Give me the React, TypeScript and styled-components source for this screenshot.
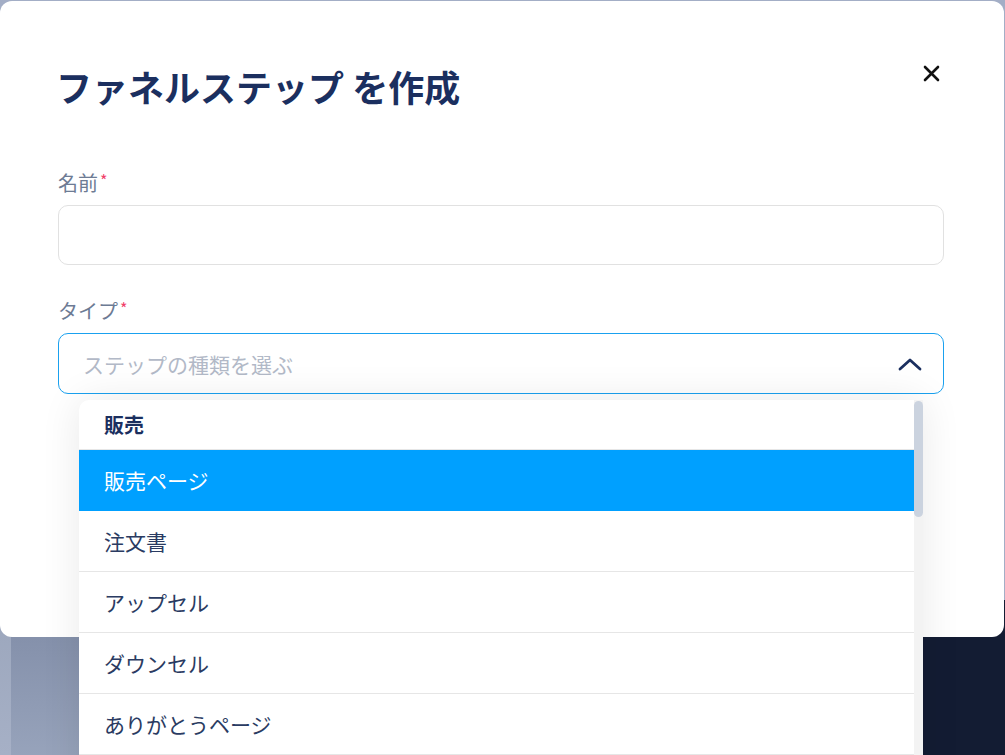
import * as React from 'react'
import styled, { createGlobalStyle } from 'styled-components'

const GlobalStyle = createGlobalStyle`
    html, body {
        margin: 0;
        padding: 0;
    }
    body {
        font-family: "Noto Sans CJK JP", "Noto Sans", sans-serif;
        overflow: hidden;
    }
`

const Page = styled.div`
    position: relative;
    width: 1005px;
    height: 755px;
    overflow: hidden;
    background: #a3aec6;
`

const Backdrop = styled.div`
    display: grid;
    grid-template-rows: 600px 1fr;
    height: 100%;
`

const BackdropBottom = styled.div`
    display: grid;
    grid-template-columns: 11px 1fr 82px;
`

const Shade = styled.div<{ $tone: string }>`
    background: ${p => p.$tone};
`

const Modal = styled.div`
    position: absolute;
    top: 1px;
    left: 0;
    width: 1004px;
    height: 636px;
    background: #fff;
    border-radius: 12px;
    box-sizing: border-box;
    padding: 60px 60px 0 58px;
`

const Header = styled.div`
    display: flex;
    justify-content: space-between;
    align-items: flex-start;
`

const Title = styled.h1`
    margin: 0 0 0 -2px;
    font-size: 36px;
    line-height: 50px;
    font-weight: 700;
    color: #1b2f5f;
`

const CloseButton = styled.button`
    border: 0;
    background: none;
    padding: 0;
    margin: 2px 3px 0 0;
    width: 20px;
    height: 20px;
    display: flex;
    align-items: center;
    justify-content: center;
    cursor: pointer;
`

const Form = styled.div`
    display: flex;
    flex-direction: column;
    margin-top: 58px;
`

const Field = styled.div`
    display: flex;
    flex-direction: column;
    gap: 8px;
    & + & {
        margin-top: 32px;
    }
`

const Label = styled.label`
    font-size: 20px;
    line-height: 28px;
    color: #6d7b94;
`

const Required = styled.span`
    color: #f0406a;
    font-size: 16px;
    vertical-align: top;
    margin-left: 2px;
    line-height: 22px;
`

const Input = styled.div`
    height: 60px;
    border: 1px solid #e1e1e1;
    border-radius: 10px;
    box-sizing: border-box;
`

const SelectWrap = styled.div`
    position: relative;
`

const SelectBox = styled.div`
    height: 61px;
    border: 1px solid #1aa1ef;
    border-radius: 10px;
    box-sizing: border-box;
    display: flex;
    align-items: center;
    justify-content: space-between;
    padding: 0 21px 0 24px;
`

const Placeholder = styled.span`
    font-size: 21px;
    color: #b2b9c7;
`

const Dropdown = styled.div`
    position: absolute;
    top: calc(100% + 6px);
    left: 21px;
    right: 21px;
    height: 400px;
    display: flex;
    background: #fff;
    border-radius: 10px 0 0 0;
    box-shadow: 0 0 40px rgba(0, 0, 0, 0.09);
    z-index: 2;
    overflow: hidden;
`

const List = styled.div`
    flex: 1;
    display: flex;
    flex-direction: column;
`

const GroupHeader = styled.div`
    height: 50px;
    box-sizing: border-box;
    display: flex;
    align-items: center;
    padding-left: 25px;
    font-size: 20px;
    font-weight: 700;
    color: #1b2f5f;
    border-bottom: 1px solid #e6e6e6;
`

const Option = styled.div<{ $active?: boolean }>`
    height: 61px;
    box-sizing: border-box;
    flex-shrink: 0;
    display: flex;
    align-items: center;
    padding-left: 25px;
    font-size: 21px;
    color: ${p => (p.$active ? '#fff' : '#2a3b62')};
    background: ${p => (p.$active ? '#00a0ff' : '#fff')};
    border-bottom: 1px solid ${p => (p.$active ? '#00a0ff' : '#e6e6e6')};
`

const ScrollTrack = styled.div`
    width: 9px;
    background: #f3f3f3;
    display: flex;
    flex-direction: column;
`

const ScrollThumb = styled.div`
    height: 116px;
    margin-top: 1px;
    background: #cbd3df;
    border-radius: 5px;
`

const options = ['販売ページ', '注文書', 'アップセル', 'ダウンセル', 'ありがとうページ']

const App: React.FC = () => {
    return (
        <Page>
            <GlobalStyle />
            <Backdrop>
                <Shade $tone="#a3aec6" />
                <BackdropBottom>
                    <Shade $tone="linear-gradient(#9ba6bc, #a6b0c6)" />
                    <Shade $tone="linear-gradient(#7f8ba6, #97a3bb)" />
                    <Shade $tone="#131c33" />
                </BackdropBottom>
            </Backdrop>
            <Modal>
                <Header>
                    <Title>ファネルステップ を作成</Title>
                    <CloseButton aria-label="close">
                        <svg width="17" height="17" viewBox="0 0 17 17">
                            <path d="M2 2 L15 15 M15 2 L2 15" stroke="#111" strokeWidth="2.6" strokeLinecap="round" />
                        </svg>
                    </CloseButton>
                </Header>
                <Form>
                    <Field>
                        <Label>名前<Required>*</Required></Label>
                        <Input />
                    </Field>
                    <Field>
                        <Label>タイプ<Required>*</Required></Label>
                        <SelectWrap>
                            <SelectBox>
                                <Placeholder>ステップの種類を選ぶ</Placeholder>
                                <svg width="24" height="14" viewBox="0 0 24 14">
                                    <path d="M2 12 L12 3 L22 12" fill="none" stroke="#1b2f5f" strokeWidth="2.8" strokeLinecap="round" strokeLinejoin="round" />
                                </svg>
                            </SelectBox>
                            <Dropdown>
                                <List>
                                    <GroupHeader>販売</GroupHeader>
                                    {options.map((o, i) => (
                                        <Option key={o} $active={i === 0}>{o}</Option>
                                    ))}
                                </List>
                                <ScrollTrack>
                                    <ScrollThumb />
                                </ScrollTrack>
                            </Dropdown>
                        </SelectWrap>
                    </Field>
                </Form>
            </Modal>
        </Page>
    )
}

export default App
